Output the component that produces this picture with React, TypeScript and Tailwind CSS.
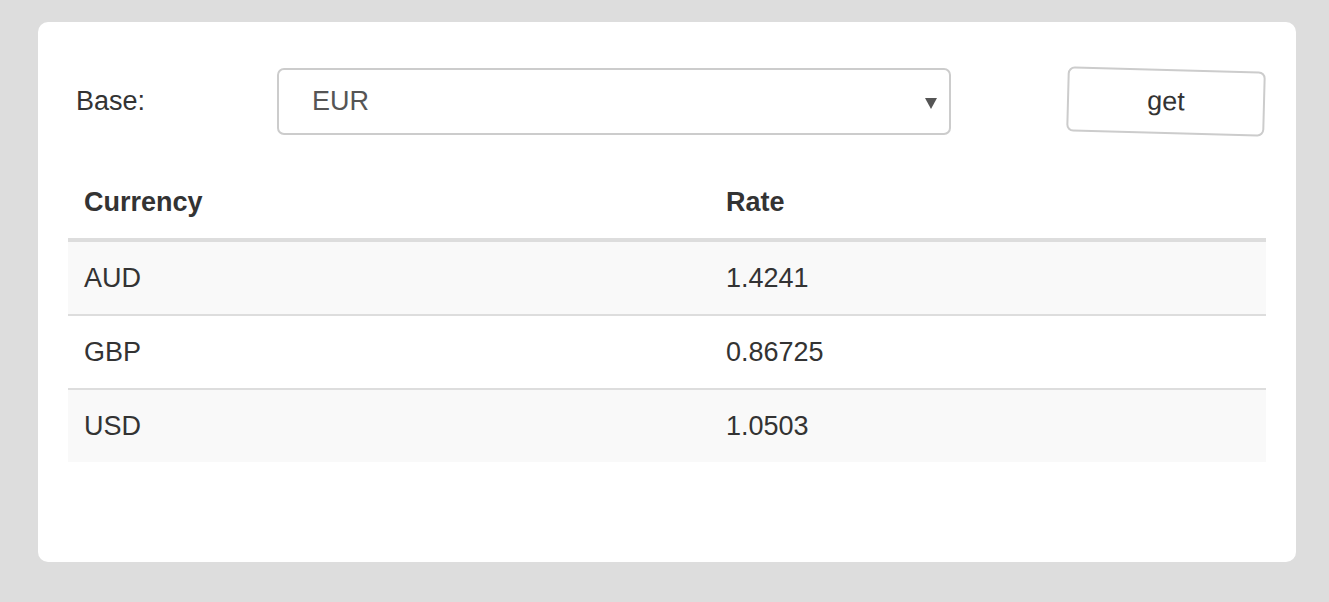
const rates = [
  { code: "AUD", rate: "1.4241" },
  { code: "GBP", rate: "0.86725" },
  { code: "USD", rate: "1.0503" },
];

export default function App() {
  return (
    <div className="min-h-[602px] w-full bg-[#dddddd] pt-[22px] pb-[40px] font-['Liberation_Sans',Arial,sans-serif] text-[#333333]">
      <div className="ml-[38px] h-[540px] w-[1258px] rounded-[10px] bg-white px-[30px] pt-[43px]">
        {/* Controls */}
        <div className="flex h-[73px] items-center">
          <label className="w-[209px] pl-[8px] text-[27px]">Base:</label>
          <div className="relative flex h-[67px] w-[674px] items-center rounded-[7px] border-2 border-[#cccccc] pl-[33px] text-[27px] text-[#555555]">
            EUR
            <svg className="absolute right-[12px] top-[27px]" width="12" height="12" viewBox="0 0 12 12">
              <path d="M0 1 L12 1 L6 12 Z" fill="#555555" />
            </svg>
          </div>
          <button className="ml-auto mr-[1px] h-[65px] w-[198px] rotate-[1.5deg] rounded-[7px] border-2 border-[#cccccc] bg-white text-[27px] text-[#333333]">
            get
          </button>
        </div>

        {/* Rates table */}
        <div className="mt-[28px]">
          <div className="grid h-[76px] grid-cols-[642px_1fr] items-center border-b-4 border-[#dddddd] text-[27px] font-bold">
            <div className="pl-[16px]">Currency</div>
            <div className="pl-[16px]">Rate</div>
          </div>
          {rates.map((r, i) => (
            <div
              key={r.code}
              className={`grid grid-cols-[642px_1fr] items-center text-[27px] ${
                i % 2 === 0 ? "bg-[#f9f9f9]" : "bg-white"
              } ${i < rates.length - 1 ? "h-[74px] border-b-2 border-[#dddddd]" : "h-[72px]"}`}
            >
              <div className="pl-[16px]">{r.code}</div>
              <div className="pl-[16px]">{r.rate}</div>
            </div>
          ))}
        </div>
      </div>
    </div>
  );
}
